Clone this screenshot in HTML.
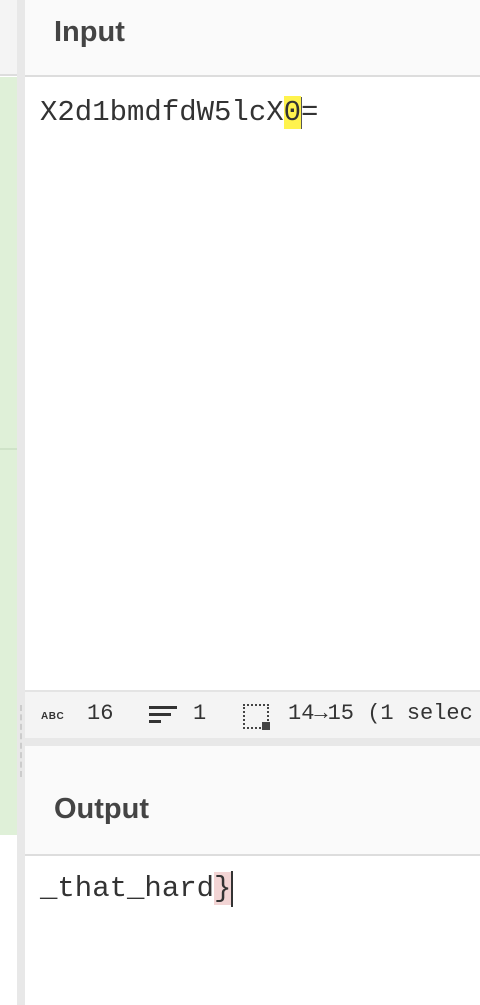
<!DOCTYPE html>
<html><head><style>
body{margin:0;width:480px;height:1005px;position:relative;overflow:hidden;background:#fff;font-family:"Liberation Sans",sans-serif}
div{position:absolute;box-sizing:border-box}
.mono{font-family:"Liberation Mono",monospace;font-size:29px;color:#333;white-space:pre}
.h{font-weight:bold;font-size:29px;color:#444}
</style></head><body>
<div style="left:0;top:0;width:17px;height:76px;background:#f4f4f4;border-bottom:2px solid #ddd"></div>
<div style="left:0;top:77px;width:17px;height:758px;background:#dff0d8"></div>
<div style="left:0;top:448px;width:17px;height:2px;background:#cfe3c8"></div>
<div style="left:17px;top:0;width:8px;height:1005px;background:#e8e8e8"></div>
<div style="left:20px;top:705px;width:2px;height:72px;border-left:2px dashed #ccc"></div>
<div style="left:25px;top:0;width:455px;height:77px;background:#fafafa;border-bottom:2px solid #ddd"></div>
<div class="h" style="left:54px;top:16px">Input</div>
<div class="mono" style="left:40px;top:96px">X2d1bmdfdW5lcX<span style="background:#fff34d">0</span>=</div>
<div style="left:301px;top:97px;width:1px;height:32px;background:#555"></div>
<div style="left:25px;top:690px;width:455px;height:48px;background:#f4f4f4;border-top:2px solid #e4e4e4"></div>
<div style="left:41px;top:711px;font-size:10px;font-weight:bold;color:#333;letter-spacing:0.5px">ABC</div>
<div class="mono" style="left:87px;top:701px;font-size:22px">16</div>
<div style="left:149px;top:706px;width:28px;height:3px;background:#333"></div>
<div style="left:149px;top:713px;width:22px;height:3px;background:#333"></div>
<div style="left:149px;top:720px;width:12px;height:3px;background:#333"></div>
<div class="mono" style="left:193px;top:701px;font-size:22px">1</div>
<div style="left:243px;top:704px;width:26px;height:25px;border:2px dotted #444"></div>
<div style="left:262px;top:722px;width:8px;height:8px;background:#444"></div>
<div class="mono" style="left:288px;top:701px;font-size:22px">14→15 (1 selec</div>
<div style="left:25px;top:738px;width:455px;height:8px;background:#e8e8e8"></div>
<div style="left:25px;top:746px;width:455px;height:110px;background:#fafafa;border-bottom:2px solid #ddd"></div>
<div class="h" style="left:54px;top:793px">Output</div>
<div class="mono" style="left:40px;top:872px">_that_hard<span style="background:#f2d4d4">}</span></div>
<div style="left:231px;top:871px;width:2px;height:36px;background:#333"></div>
</body></html>
